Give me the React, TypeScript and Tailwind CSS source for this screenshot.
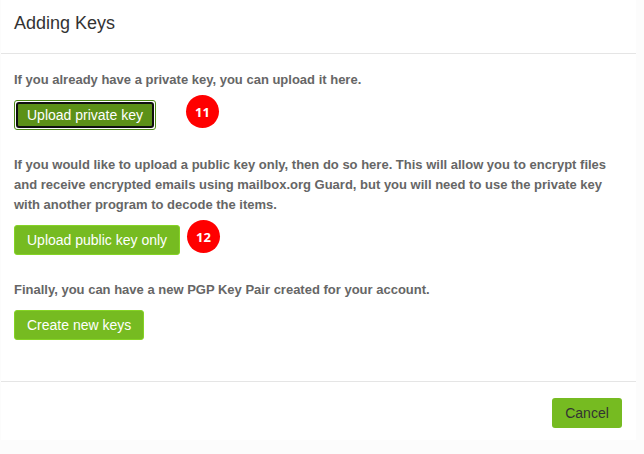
const Badge = ({ value }: { value: string }) => (
  <span className="flex h-[33px] w-[33px] items-center justify-center rounded-full bg-[#ff0000] font-['Open_Sans',sans-serif] text-[13px] font-bold text-white">
    {value}
  </span>
);

const App = () => {
  return (
    <div className="h-[454px] w-[644px] overflow-hidden bg-[#fcfcfc] font-['Liberation_Sans',Arial,sans-serif] text-[#333]">
      <div className="ml-px h-[440px] w-[635px] bg-white">
        <header className="h-[54px] border-b border-[#e5e5e5] pl-[13px] pt-[11px]">
          <h1 className="text-[18px] leading-6">Adding Keys</h1>
        </header>

        <main className="h-[327px] pl-[13px] pt-4 text-[13px] font-bold leading-5 text-[#666]">
          <p>If you already have a private key, you can upload it here.</p>
          <div className="mt-[5px] flex h-[60px] items-start">
            {/* focused: white and black rings inside the border */}
            <button className="mt-[5px] h-[30px] w-[142px] whitespace-nowrap rounded-[3px] border border-[#4d8a14] bg-white p-px text-sm font-normal text-white">
              <span className="flex h-full items-center rounded-[3px] border-2 border-[#101010] bg-[#5c9118] pl-[9px]">
                Upload private key
              </span>
            </button>
            <div className="ml-[30px]">
              <Badge value="11" />
            </div>
          </div>

          <p className="whitespace-nowrap">
            If you would like to upload a public key only, then do so here. This will allow you to encrypt files
            <br />
            and receive encrypted emails using mailbox.org Guard, but you will need to use the private key
            <br />
            with another program to decode the items.
          </p>
          <div className="mt-[5px] flex h-[60px] items-start">
            <button className="mt-[5px] h-[30px] w-[166px] whitespace-nowrap rounded-[3px] border border-[#85d325] bg-[#76bb21] pl-3 text-left text-sm font-normal text-white">
              Upload public key only
            </button>
            <div className="ml-[7px]">
              <Badge value="12" />
            </div>
          </div>

          <p>Finally, you can have a new PGP Key Pair created for your account.</p>
          <button className="mt-[10px] h-[30px] w-[130px] whitespace-nowrap rounded-[3px] border border-[#85d325] bg-[#76bb21] pl-3 text-left text-sm font-normal text-white">
            Create new keys
          </button>
        </main>

        <footer className="flex h-[59px] justify-end border-t border-[#e5e5e5] pr-[14px] pt-4">
          <button className="h-[30px] w-[70px] rounded-[3px] bg-[#76bb21] text-sm text-[#333]">Cancel</button>
        </footer>
      </div>
    </div>
  );
};

export default App;
